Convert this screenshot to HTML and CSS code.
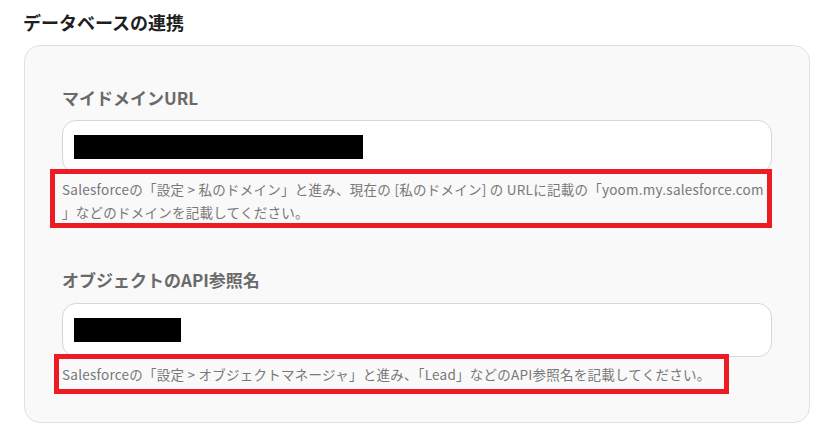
FILE: index.html
```html
<!DOCTYPE html>
<html lang="ja">
<head>
    <meta charset="UTF-8">
    <meta name="viewport" content="width=device-width, initial-scale=1.0">
    <title>データベースの連携</title>
    <link rel="stylesheet" href="styles.css">
</head>
<body>

    <h2 class="section-title">データベースの連携</h2>

    <div class="card">
        <div class="field">
            <label class="field-label">マイドメインURL</label>
            <div class="input">
                <span class="masked masked-long"></span>
            </div>
            <p class="help help-wide">Salesforceの「設定 &gt; 私のドメイン」と進み、現在の [私のドメイン] の URLに記載の「yoom.my.salesforce.com<br>」などのドメインを記載してください。</p>
        </div>

        <div class="field">
            <label class="field-label">オブジェクトのAPI参照名</label>
            <div class="input input-tall">
                <span class="masked masked-short"></span>
            </div>
            <p class="help">Salesforceの「設定 &gt; オブジェクトマネージャ」と進み、「Lead」などのAPI参照名を記載してください。</p>
        </div>
    </div>

</body>
</html>
```

FILE: styles.css
```css
body {
    margin: 0;
    padding: 0 30px 0 23px;
    background: #ffffff;
    font-family: "Noto Sans CJK JP", "Noto Sans", sans-serif;
}

.section-title {
    margin: 0;
    padding-top: 9px;
    font-size: 18px;
    line-height: 26px;
    font-weight: bold;
    color: #1f1f1f;
}

.card {
    margin: 10px 0 0 1px;
    width: 786px;
    box-sizing: border-box;
    background: #f9f9f9;
    border: 1px solid #e0e0e5;
    border-radius: 16px;
    padding: 40px 37px 28px 37px;
}

.field + .field {
    margin-top: 40px;
}

.field-label {
    display: block;
    font-size: 17px;
    line-height: 24px;
    font-weight: bold;
    color: #6a6a6a;
    margin-bottom: 10px;
}

.field + .field .field-label {
    margin-bottom: 11px;
}

.input {
    height: 53px;
    box-sizing: border-box;
    background: #fff;
    border: 1px solid #d5d7e0;
    border-radius: 14px;
    padding: 14px 0 0 11px;
}

.input-tall {
    height: 54px;
}

.masked {
    display: block;
    height: 24px;
    background: #000;
}

.masked-long {
    width: 289px;
}

.masked-short {
    width: 107px;
}

.help {
    margin: -3px 0 0 -8px;
    width: fit-content;
    border: 5px solid #ed1c24;
    padding: 4px 14px 3px 3px;
    font-size: 13.5px;
    line-height: 23px;
    letter-spacing: 0.25px;
    white-space: nowrap;
    color: #777777;
    background: #f9f9f9;
}

.help-wide {
    width: 722px;
    box-sizing: border-box;
    margin: -4px 0 0 -12px;
    padding: 4px 8px 0 7px;
    line-height: 22.5px;
}
```
